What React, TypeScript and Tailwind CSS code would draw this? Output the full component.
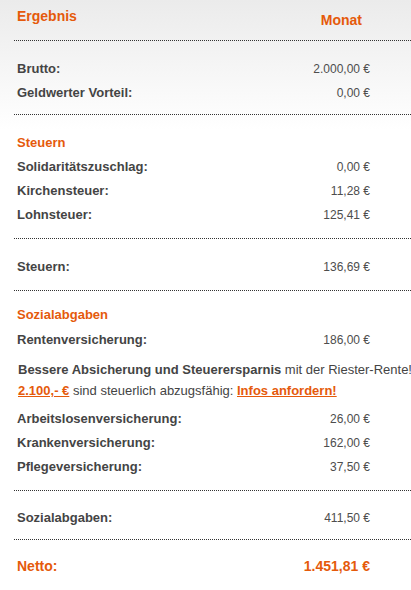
const font = { fontFamily: '"Liberation Sans", Arial, sans-serif' }

type Row = { label: string; value: string }

function Line() {
  return <div className="border-t border-dotted border-[#333] w-full" />
}

function DataRow({ label, value }: Row) {
  return (
    <div className="flex items-center h-6">
      <div className="flex-1 text-[13px] font-bold text-[#444]">{label}</div>
      <div className="w-[120px] text-right text-[12px] text-[#4d4d4d]">{value}</div>
      <div className="w-[41px]" />
    </div>
  )
}

function SectionTitle({ children }: { children: string }) {
  return (
    <div className="flex items-center h-6 text-[13px] font-bold text-[#e55a0b]">{children}</div>
  )
}

export default function App() {
  return (
    <div
      style={font}
      className="w-[411px] h-[590px] overflow-hidden bg-[linear-gradient(to_bottom,#ebebeb,#ffffff_130px)]"
    >
      <div className="pl-[14px]">
        {/* header */}
        <div className="flex h-10 text-[14px] font-bold text-[#e55a0b]">
          <div className="flex-1 pl-[3px] pt-[6px]">Ergebnis</div>
          <div className="pt-[10px] pr-[49px]">Monat</div>
        </div>
        <Line />

        <div className="pl-[3px] pt-4 pb-[9px]">
          <DataRow label="Brutto:" value="2.000,00 €" />
          <DataRow label="Geldwerter Vorteil:" value="0,00 €" />
        </div>
        <Line />

        <div className="pl-[3px] pt-4 pb-[11px]">
          <SectionTitle>Steuern</SectionTitle>
          <DataRow label="Solidaritätszuschlag:" value="0,00 €" />
          <DataRow label="Kirchensteuer:" value="11,28 €" />
          <DataRow label="Lohnsteuer:" value="125,41 €" />
        </div>
        <Line />

        <div className="pl-[3px] pt-4 pb-[11px]">
          <DataRow label="Steuern:" value="136,69 €" />
        </div>
        <Line />

        <div className="pl-[3px] pt-3 pb-[11px]">
          <SectionTitle>Sozialabgaben</SectionTitle>
          <div className="pt-px">
            <DataRow label="Rentenversicherung:" value="186,00 €" />
          </div>
          <div className="pl-px pt-[7px] pb-[6px] text-[13px] leading-[21px] text-[#444] whitespace-nowrap">
            <div>
              <b>Bessere Absicherung und Steuerersparnis</b> mit der Riester-Rente!
            </div>
            <div>
              <a href="#" className="font-bold text-[#e55a0b] underline">2.100,- €</a> sind steuerlich
              abzugsfähig:{' '}
              <a href="#" className="font-bold text-[#e55a0b] underline">Infos anfordern!</a>
            </div>
          </div>
          <DataRow label="Arbeitslosenversicherung:" value="26,00 €" />
          <DataRow label="Krankenversicherung:" value="162,00 €" />
          <DataRow label="Pflegeversicherung:" value="37,50 €" />
        </div>
        <Line />

        <div className="pl-[3px] pt-[15px] pb-[9px]">
          <DataRow label="Sozialabgaben:" value="411,50 €" />
        </div>
        <Line />

        <div className="pl-[3px] pt-[14px]">
          <div className="flex items-center h-6 text-[14px] font-bold text-[#e55a0b]">
            <div className="flex-1">Netto:</div>
            <div className="w-[120px] text-right">1.451,81 €</div>
            <div className="w-[41px]" />
          </div>
        </div>
      </div>
    </div>
  )
}
